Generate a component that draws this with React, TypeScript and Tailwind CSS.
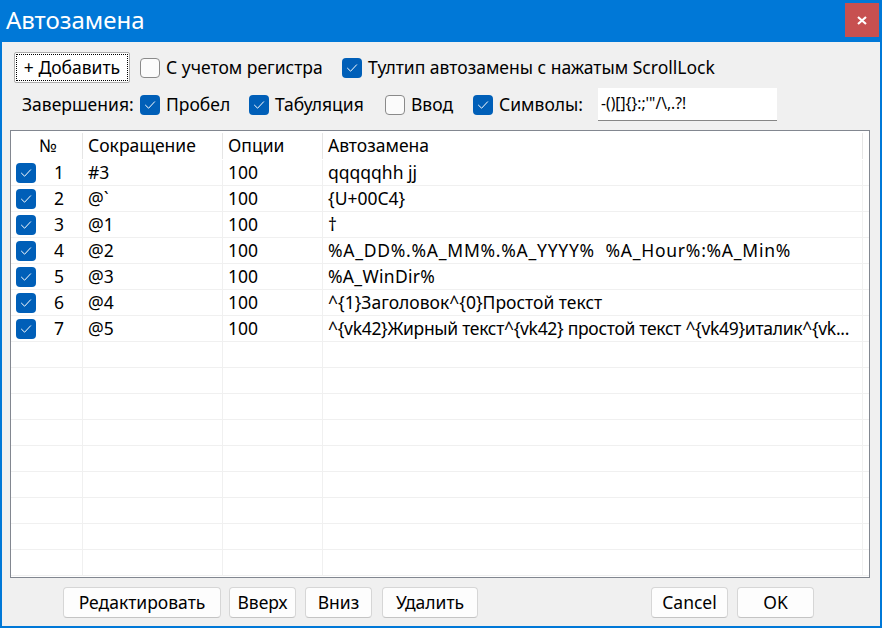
import React from "react"

const font = "font-['Noto_Sans','Liberation_Sans',sans-serif]"

const rows = [
  { n: 1, abbr: "#3", opt: "100", text: "qqqqqhh jj", cls: "" },
  { n: 2, abbr: "@`", opt: "100", text: "{U+00C4}", cls: "" },
  { n: 3, abbr: "@1", opt: "100", text: "†", cls: "" },
  { n: 4, abbr: "@2", opt: "100", text: "%A_DD%.%A_MM%.%A_YYYY%  %A_Hour%:%A_Min%", cls: "tracking-[0.75px]" },
  { n: 5, abbr: "@3", opt: "100", text: "%A_WinDir%", cls: "tracking-[0.3px]" },
  { n: 6, abbr: "@4", opt: "100", text: "^{1}Заголовок^{0}Простой текст", cls: "" },
  { n: 7, abbr: "@5", opt: "100", text: "^{vk42}Жирный текст^{vk42} простой текст ^{vk49}италик^{vk...", cls: "tracking-[-0.3px]" },
]

function Check({ checked }: { checked: boolean }) {
  if (!checked) {
    return (
      <span className="box-border block h-[20px] w-[20px] shrink-0 rounded-[4px] border border-[#8a8a8a] bg-[#fbfbfb]" />
    )
  }
  return (
    <span className="flex h-[20px] w-[20px] shrink-0 items-center justify-center rounded-[4px] bg-[#005fb8]">
      <svg width="12" height="10" viewBox="0 0 12 10" fill="none">
        <path d="M1.5 5.2 L4.6 8.2 L10.6 1.8" stroke="white" strokeWidth="1" strokeLinecap="round" strokeLinejoin="round" />
      </svg>
    </span>
  )
}

function Option({ checked, label, className }: { checked: boolean; label: string; className: string }) {
  return (
    <div className={`flex items-center gap-[6px] ${className}`}>
      <Check checked={checked} />
      <span className="whitespace-nowrap">{label}</span>
    </div>
  )
}

function Btn({ label, className }: { label: string; className: string }) {
  return (
    <button className={`h-[31px] rounded-[4px] border border-[#d6d6d6] border-b-[#c4c4c4] bg-[#fdfdfd] text-[17.5px] text-black ${className}`}>
      {label}
    </button>
  )
}

export default function App() {
  return (
    <div className={`flex h-[628px] w-[882px] flex-col bg-[#0078d7] px-[2px] pb-[2px] ${font} text-[17.5px] text-black`}>
      {/* title bar */}
      <div className="flex h-[42px] shrink-0 items-start justify-between">
        <div className="pl-[4px] pt-[4px] text-[24px] leading-[32px] text-white">Автозамена</div>
        <div className="mr-[1px] mt-[3px] flex h-[34px] w-[34px] items-center justify-center bg-[#c75050]">
          <svg width="10" height="9" viewBox="0 0 10 9">
            <path d="M1 1 L9 8 M9 1 L1 8" stroke="white" strokeWidth="2.2" />
          </svg>
        </div>
      </div>

      <div className="flex flex-1 flex-col bg-[#f0f0f0]">
        {/* options row 1 */}
        <div className="mt-[10px] flex h-[31px] items-center pl-[12px]">
          <div className="h-[31px] w-[116px] rounded-[2px] border border-[#adadad] bg-white p-[1px]">
            <div className="flex h-full w-full items-center justify-center border border-dotted border-black">
              + Добавить
            </div>
          </div>
          <Option checked={false} label="С учетом регистра" className="ml-[10px] w-[202px]" />
          <Option checked label="Тултип автозамены с нажатым ScrollLock" className="" />
        </div>

        {/* options row 2 */}
        <div className="mt-[5px] flex h-[33px] items-center">
          <span className="w-[138px] pl-[20px]">Завершения:</span>
          <Option checked label="Пробел" className="w-[109px]" />
          <Option checked label="Табуляция" className="w-[136px]" />
          <Option checked={false} label="Ввод" className="w-[88px]" />
          <Option checked label="Символы:" className="w-[125px]" />
          <div className="flex h-[33px] w-[179px] items-center border-b border-[#868686] bg-white pl-[3px] text-[15.5px]">
            {"-()[]{}:;'\"/\\,.?!"}
          </div>
        </div>

        {/* table */}
        <div className="ml-[8px] mt-[9px] h-[448px] w-[860px] border border-[#828790] bg-white">
          <div className="flex h-[29px] items-center">
            <div className="flex w-[71px] justify-center pl-[3px]">№</div>
            <div className="h-[26px] w-px bg-[#e5e5e5]" />
            <div className="w-[139px] pl-[5px]">Сокращение</div>
            <div className="h-[26px] w-px bg-[#e5e5e5]" />
            <div className="w-[99px] pl-[5px]">Опции</div>
            <div className="h-[26px] w-px bg-[#e5e5e5]" />
            <div className="w-[539px] pl-[5px]">Автозамена</div>
            <div className="h-[26px] w-px bg-[#e5e5e5]" />
          </div>
          {Array.from({ length: 16 }).map((_, i) => {
            const r = rows[i]
            return (
              <div key={i} className="flex h-[26px] border-b border-[#f0f0f0]">
                <div className="flex w-[72px] items-center border-r border-[#f0f0f0] pl-[5px]">
                  {r && (
                    <>
                      <Check checked />
                      <span className="w-[28px] text-right">{r.n}</span>
                    </>
                  )}
                </div>
                <div className="flex w-[140px] items-center border-r border-[#f0f0f0] pl-[5px]">{r?.abbr}</div>
                <div className="flex w-[100px] items-center border-r border-[#f0f0f0] pl-[5px]">{r?.opt}</div>
                <div className={`flex w-[540px] items-center overflow-hidden whitespace-pre border-r border-[#f0f0f0] pl-[5px] ${r?.cls ?? ""}`}>
                  {r?.text}
                </div>
              </div>
            )
          })}
        </div>

        {/* buttons */}
        <div className="mt-[9px] flex items-center">
          <Btn label="Редактировать" className="ml-[61px] w-[158px]" />
          <Btn label="Вверх" className="ml-[8px] w-[67px]" />
          <Btn label="Вниз" className="ml-[9px] w-[67px]" />
          <Btn label="Удалить" className="ml-[10px] w-[96px]" />
          <Btn label="Cancel" className="ml-[173px] w-[77px]" />
          <Btn label="OK" className="ml-[9px] w-[77px]" />
        </div>
      </div>
    </div>
  )
}
